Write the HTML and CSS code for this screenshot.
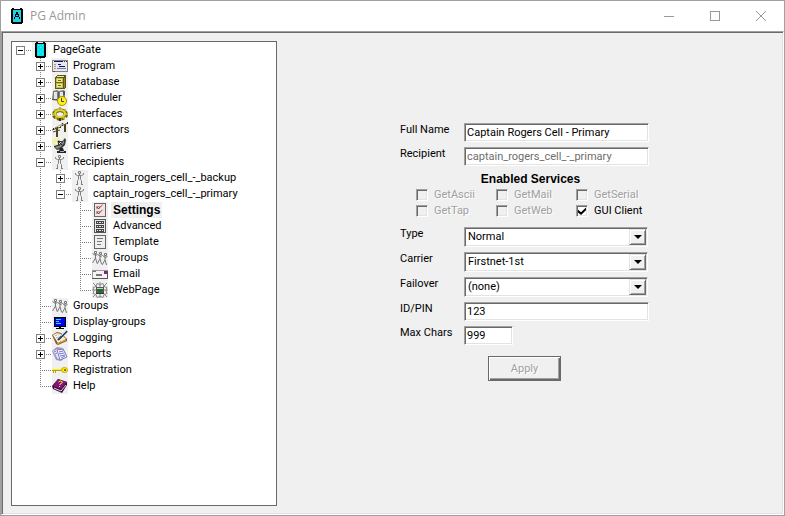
FILE: index.html
```html
<!DOCTYPE html>
<html lang="en">

<head>
    <meta charset="UTF-8">
    <meta name="viewport" content="width=device-width, initial-scale=1.0">
    <title>PG Admin</title>
    <link rel="stylesheet" href="styles.css">
</head>

<body>
    <!-- Icons used more than once in the tree -->
    <svg class="sprite" aria-hidden="true">
        <symbol id="person" viewBox="0 0 16 16">
            <g fill="none" stroke="#808080">
                <path d="M6.5 1.5h2v2h-2zM3.5 3v1.500l2 1h4l2-1V3M6.500 5.500v4l-1 1V15M8.500 5.500v4l1 1V15M7.500 4v2M4 14.500h2M9 14.500h2"/>
            </g>
        </symbol>
        <symbol id="people" viewBox="0 0 16 16">
            <g fill="none" stroke="#777">
                <path d="M2.500 1.500h2v2h-2zM.5 3.500l3 2 2-1M3.500 4v4l-3 5M3.500 8l1.500 5"/>
                <path d="M7.500 2.500h2v2h-2zM5.500 4.500l3 2 2-1M8 5v4l-3 5M8 9l1.500 5"/>
                <path d="M12.500 3.500h2v2h-2zM10.500 5.500l3 2 2-1M13 6v4l-3 5M13 10l1.500 5"/>
            </g>
        </symbol>
    </svg>

    <div class="window">
        <header class="title-bar">
            <svg class="app-icon" viewBox="0 0 12 16">
                <path d="M1 0h2v1h6V0h2v1h1v14h-1v1H1v-1H0V1h1z" fill="#000"/>
                <path d="M2 2h8v12H2z" fill="#19d3e6"/>
                <path d="M5 4h2v2h1v3h1v2H8V9H4v2H3V9h1V6h1zM5 7v1h2V7z" fill="#000"/>
            </svg>
            <h1>PG Admin</h1>
            <button class="window-button" aria-label="Minimize">
                <svg viewBox="0 0 10 10"><path d="M0 5h10v1H0z" fill="#999"/></svg>
            </button>
            <button class="window-button" aria-label="Maximize">
                <svg viewBox="0 0 10 10"><path d="M.5.5h9v9h-9z" fill="none" stroke="#999"/></svg>
            </button>
            <button class="window-button" aria-label="Close">
                <svg class="smooth" viewBox="0 0 10 10"><path d="M0 0l10 10M10 0L0 10" fill="none" stroke="#999"/></svg>
            </button>
        </header>

        <main class="client">
            <nav class="tree-panel">
                <ul class="tree">
                    <li>
                        <div class="node">
                            <span class="branch"><button class="toggle open" aria-label="Collapse"></button></span>
                            <svg class="icon" viewBox="0 0 16 16">
                                <path d="M4 0h2v1h5V0h2v1h1v14h-1v1H4v-1H3V1h1z" fill="#000"/>
                                <path d="M5 2h7v12H5z" fill="#00e4ee"/>
                                <path d="M6 3h1v1H6zM8 5h1v1H8zM10 3h1v1h-1zM6 7h1v1H6zM10 7h1v1h-1zM8 9h1v1H8zM6 11h1v1H6zM10 11h1v1h-1z" fill="#6adfe6"/>
                            </svg>
                            <a href="#pagegate">PageGate</a>
                        </div>
                        <ul>
                            <li>
                                <div class="node">
                                    <span class="branch"><button class="toggle" aria-label="Expand"></button></span>
                                    <svg class="icon" viewBox="0 0 16 16">
                                        <path d="M0 2h16v12H0z" fill="#808080"/>
                                        <path d="M1 3h14v10H1z" fill="#e8e8e8"/>
                                        <path d="M2 3h9v1H2zM6 6h3v1H6zM7 8h6v1H7z" fill="#101080"/>
                                        <path d="M5 10h9v1H5z" fill="#7878a8"/>
                                        <path d="M2 6h2v1H2zM2 8h2v1H2zM2 10h2v1H2z" fill="#999"/>
                                        <path d="M12 3h1v1h-1zM14 3h1v1h-1z" fill="#333"/>
                                        <path d="M1 13h2v1H1z" fill="#d02020"/>
                                    </svg>
                                    <a href="#program">Program</a>
                                </div>
                            </li>
                            <li>
                                <div class="node">
                                    <span class="branch"><button class="toggle" aria-label="Expand"></button></span>
                                    <svg class="icon" viewBox="0 0 16 16">
                                        <path d="M3 3l3-2h8v12l-2 2H3z" fill="#5a5714"/>
                                        <path d="M4 3l2-1h7l-2 1z" fill="#f0eca0"/>
                                        <path d="M4 4h7v10H4z" fill="#c4bc4c"/>
                                        <path d="M12 4l1-1v10l-1 1z" fill="#8c8628"/>
                                        <path d="M5 5h5v3H5zM5 10h5v3H5z" fill="#eee690"/>
                                        <path d="M4 8h7v1H4zM6 6h3v1H6zM6 11h3v1H6z" fill="#6b6620"/>
                                    </svg>
                                    <a href="#database">Database</a>
                                </div>
                            </li>
                            <li>
                                <div class="node">
                                    <span class="branch"><button class="toggle" aria-label="Expand"></button></span>
                                    <svg class="icon smooth" viewBox="0 0 16 16">
                                        <path d="M1 1l4-1 2 1 4-1 2 1v9H8l-2 1-6-1z" fill="#808080"/>
                                        <path d="M2 2h3v7H2zM8 2h3v6H8z" fill="#e6e6e6"/>
                                        <path d="M6 2h1v8H6zM0 9h5v1H0zM11 1h2v4h-2z" fill="#555"/>
                                        <circle cx="10" cy="11" r="4.500" fill="#fff01c" stroke="#a89200"/>
                                        <path d="M9.500 8v3.500H12" fill="none" stroke="#444"/>
                                    </svg>
                                    <a href="#scheduler">Scheduler</a>
                                </div>
                            </li>
                            <li>
                                <div class="node">
                                    <span class="branch"><button class="toggle" aria-label="Expand"></button></span>
                                    <svg class="icon smooth" viewBox="0 0 16 16">
                                        <ellipse cx="8" cy="8.500" rx="6" ry="4" fill="none" stroke="#6a6410" stroke-width="4" stroke-dasharray="2.500 1.500"/>
                                        <ellipse cx="8" cy="8" rx="5" ry="3.500" fill="none" stroke="#827b14" stroke-width="3"/>
                                        <ellipse cx="8" cy="7.500" rx="5" ry="3.500" fill="none" stroke="#e0d634" stroke-width="2"/>
                                        <path d="M7 1h2v3H7zM2 3h2v2H2zM12 3h2v2h-2zM0 7h2v2H0zM14 7h2v2h-2zM3 11h2v2H3zM11 11h2v2h-2z" fill="#bdb428"/>
                                        <path d="M7 12h2v3H7z" fill="#3d3a08"/>
                                        <ellipse cx="8" cy="8" rx="3" ry="1.500" fill="#f0f0f0"/>
                                    </svg>
                                    <a href="#interfaces">Interfaces</a>
                                </div>
                            </li>
                            <li>
                                <div class="node">
                                    <span class="branch"><button class="toggle" aria-label="Expand"></button></span>
                                    <svg class="icon smooth" viewBox="0 0 16 16">
                                        <path d="M4 5h2v10H4zM12 2h2v8h-2z" fill="#4c451c"/>
                                        <path d="M0 8l9-3M1 10l7-2M9 4l7-3" fill="none" stroke="#5a512a"/>
                                        <path d="M1 6h1v2H1zM3 5h1v2H3zM8 4h1v2H8zM10 1h1v3h-1zM15 0h1v2h-1z" fill="#302c18"/>
                                        <path d="M8 4.500l4-3M3 6l7-4" fill="none" stroke="#aaa587"/>
                                    </svg>
                                    <a href="#connectors">Connectors</a>
                                </div>
                            </li>
                            <li>
                                <div class="node">
                                    <span class="branch"><button class="toggle" aria-label="Expand"></button></span>
                                    <svg class="icon smooth" viewBox="0 0 16 16">
                                        <path d="M0 3.500l3-2 4-1M0 6.500l3-3 3-1M2 7.500l2-3" fill="none" stroke="#fff000" stroke-dasharray="2 1"/>
                                        <path d="M13 0l1 2-1 5-4 4-4 1-3-3V8l6-2z" fill="#383838"/>
                                        <path d="M12 2v3l-3 4-4 2-2-2 5-2z" fill="#888"/>
                                        <path d="M6 3l4 4M6 3l1 5M6 3l5 1" fill="none" stroke="#222"/>
                                        <path d="M8 10h3l1 3h2v2H5v-2h2z" fill="#222"/>
                                        <path d="M8 13h4v1H8z" fill="#aaa"/>
                                    </svg>
                                    <a href="#carriers">Carriers</a>
                                </div>
                            </li>
                            <li>
                                <div class="node">
                                    <span class="branch"><button class="toggle open" aria-label="Collapse"></button></span>
                                    <svg class="icon smooth"><use href="#person"/></svg>
                                    <a href="#recipients">Recipients</a>
                                </div>
                                <ul>
                                    <li>
                                        <div class="node">
                                            <span class="branch"><button class="toggle" aria-label="Expand"></button></span>
                                            <svg class="icon smooth"><use href="#person"/></svg>
                                            <a href="#backup">captain_rogers_cell_-_backup</a>
                                        </div>
                                    </li>
                                    <li>
                                        <div class="node">
                                            <span class="branch"><button class="toggle open" aria-label="Collapse"></button></span>
                                            <svg class="icon smooth"><use href="#person"/></svg>
                                            <a href="#primary">captain_rogers_cell_-_primary</a>
                                        </div>
                                        <ul>
                                            <li>
                                                <div class="node">
                                                    <span class="branch"></span>
                                                    <svg class="icon smooth" viewBox="0 0 16 16">
                                                        <path d="M2 1h12v14H2z" fill="#666"/>
                                                        <path d="M3 2h10v12H3z" fill="#e8e8e8"/>
                                                        <path d="M4.500 4.500h3v2h-3zM4.500 9.500h3v2h-3z" fill="none" stroke="#999"/>
                                                        <path d="M5 5l1.500 1.500 4-3.500M5 10l1.500 1.500 4-3.500" fill="none" stroke="#f01818"/>
                                                    </svg>
                                                    <a href="#settings" class="selected">Settings</a>
                                                </div>
                                            </li>
                                            <li>
                                                <div class="node">
                                                    <span class="branch"></span>
                                                    <svg class="icon" viewBox="0 0 16 16">
                                                        <path d="M2 1h12v14H2z" fill="#555"/>
                                                        <path d="M3 2h10v12H3z" fill="#e8e8e8"/>
                                                        <path d="M4 3h8v3H4zM4 7h8v3H4zM4 11h8v3H4z" fill="#444"/>
                                                        <path d="M5 4h1v1H5zM7 4h2v1H7zM10 4h1v1h-1zM5 8h1v1H5zM7 8h2v1H7zM10 8h1v1h-1zM5 12h1v1H5zM7 12h2v1H7zM10 12h1v1h-1z" fill="#e8e8e8"/>
                                                    </svg>
                                                    <a href="#advanced">Advanced</a>
                                                </div>
                                            </li>
                                            <li>
                                                <div class="node">
                                                    <span class="branch"></span>
                                                    <svg class="icon" viewBox="0 0 16 16">
                                                        <path d="M2 1h12v14H2z" fill="#666"/>
                                                        <path d="M3 2h10v12H3z" fill="#eee"/>
                                                        <path d="M5 4h6v1H5zM5 7h5v1H5zM5 10h4v1H5z" fill="#777"/>
                                                    </svg>
                                                    <a href="#template">Template</a>
                                                </div>
                                            </li>
                                            <li>
                                                <div class="node">
                                                    <span class="branch"></span>
                                                    <svg class="icon smooth"><use href="#people"/></svg>
                                                    <a href="#member-groups">Groups</a>
                                                </div>
                                            </li>
                                            <li>
                                                <div class="node">
                                                    <span class="branch"></span>
                                                    <svg class="icon" viewBox="0 0 16 16">
                                                        <path d="M0 4h16v9H0z" fill="#999"/>
                                                        <path d="M1 5h14v7H1z" fill="#f4f4f4"/>
                                                        <path d="M1 5h3v1H1zM4 8h6v2H4z" fill="#777"/>
                                                        <path d="M12 5h3v3h-3z" fill="#8a1a98"/>
                                                        <path d="M0 12h16v1H0zM15 5h1v8h-1z" fill="#555"/>
                                                    </svg>
                                                    <a href="#email">Email</a>
                                                </div>
                                            </li>
                                            <li>
                                                <div class="node">
                                                    <span class="branch"></span>
                                                    <svg class="icon smooth" viewBox="0 0 16 16">
                                                        <g fill="none" stroke="#888">
                                                            <path d="M1 1l14 14M15 1L1 15M8 0v16M0 8h16"/>
                                                            <path d="M5 1.500l3 1 3-1 1 3 3 1-1 3 1 3-3 1-1 3-3-1-3 1-1-3-3-1 1-3-1-3 3-1z"/>
                                                        </g>
                                                        <path d="M4 5h8v7H4z" fill="#555"/>
                                                        <path d="M5 6h6v1H5z" fill="#ccc"/>
                                                        <path d="M6 7h4v3H6z" fill="#087a18"/>
                                                        <path d="M4 11h8v1H4z" fill="#333"/>
                                                    </svg>
                                                    <a href="#webpage">WebPage</a>
                                                </div>
                                            </li>
                                        </ul>
                                    </li>
                                </ul>
                            </li>
                            <li>
                                <div class="node">
                                    <span class="branch"></span>
                                    <svg class="icon smooth"><use href="#people"/></svg>
                                    <a href="#groups">Groups</a>
                                </div>
                            </li>
                            <li>
                                <div class="node">
                                    <span class="branch"></span>
                                    <svg class="icon" viewBox="0 0 16 16">
                                        <path d="M2 3h12v10H9v1h3v1H4v-1h3v-1H2z" fill="#000"/>
                                        <path d="M3 4h10v8H3z" fill="#0000f0"/>
                                        <path d="M4 5h5v1H4zM4 7h3v1H4zM4 9h5v1H4z" fill="#20e8f0"/>
                                    </svg>
                                    <a href="#display-groups">Display-groups</a>
                                </div>
                            </li>
                            <li>
                                <div class="node">
                                    <span class="branch"><button class="toggle" aria-label="Expand"></button></span>
                                    <svg class="icon smooth" viewBox="0 0 16 16">
                                        <path d="M0 5l5-3 4 1 6 6v2l-9 4-2-1z" fill="#8a5a20"/>
                                        <path d="M1 5l4-2 4 8-3 2z" fill="#fffdf0"/>
                                        <path d="M5 3l4 1 5 5-5 3z" fill="#f3ead0"/>
                                        <path d="M3 6l2-1M4 8l2-1M5 10l2-1" fill="none" stroke="#9ab"/>
                                        <path d="M15 1L8 8l-2 2" fill="none" stroke="#203c68" stroke-width="2"/>
                                        <path d="M15 0l-6 6" fill="none" stroke="#a9c8f0"/>
                                        <path d="M5 14l9-4" fill="none" stroke="#e0a030"/>
                                    </svg>
                                    <a href="#logging">Logging</a>
                                </div>
                            </li>
                            <li>
                                <div class="node">
                                    <span class="branch"><button class="toggle" aria-label="Expand"></button></span>
                                    <svg class="icon smooth" viewBox="0 0 16 16">
                                        <path d="M0 5l5-4 6 1 4 8-6 5-5-1z" fill="#9a9ac4"/>
                                        <path d="M1 5l5-2 4 9-4 1z" fill="#e8e8f8"/>
                                        <path d="M5 4l6-1 4 8-7 3z" fill="#f6f6ff" stroke="#7c7cc0"/>
                                        <path d="M7 6l4-1M7 8l5-1M8 10l5-1M9 12l4-2M2 6l2-1M3 8l2-1" fill="none" stroke="#7474d4"/>
                                        <path d="M3 2h4v1H3zM9 2h2v1H9z" fill="#b090a4"/>
                                    </svg>
                                    <a href="#reports">Reports</a>
                                </div>
                            </li>
                            <li>
                                <div class="node">
                                    <span class="branch"></span>
                                    <svg class="icon smooth" viewBox="0 0 16 16">
                                        <path d="M0 7h9v2H4v2H3V9H2v2H1V9H0z" fill="#b8a400"/>
                                        <path d="M0 7h10v1H0z" fill="#fff018"/>
                                        <ellipse cx="12.500" cy="8" rx="3" ry="2.500" fill="#fff018" stroke="#c0aa00"/>
                                        <path d="M12 7h2v2h-2z" fill="#8a7a00"/>
                                    </svg>
                                    <a href="#registration">Registration</a>
                                </div>
                            </li>
                            <li>
                                <div class="node">
                                    <span class="branch"></span>
                                    <svg class="icon smooth" viewBox="0 0 16 16">
                                        <path d="M6 1l9 3v3l-5 8-9-4-1-3z" fill="#3c083c"/>
                                        <path d="M6 1l9 3-6 7-8-3z" fill="#82127e"/>
                                        <path d="M2 10l7 3 5-6" fill="none" stroke="#ddd"/>
                                        <path d="M6.500 4l2-1 2 1-1 1.500-1.500.5v1M7.500 8v1" fill="none" stroke="#fff000"/>
                                    </svg>
                                    <a href="#help">Help</a>
                                </div>
                            </li>
                        </ul>
                    </li>
                </ul>
            </nav>

            <form class="settings-form">
                <label for="fullName">Full Name</label>
                <input type="text" id="fullName" value="Captain Rogers Cell - Primary">
                <label for="recipient">Recipient</label>
                <input type="text" id="recipient" value="captain_rogers_cell_-_primary" disabled>

                <div class="services" role="group" aria-labelledby="servicesTitle">
                    <h2 id="servicesTitle">Enabled Services</h2>
                    <label class="disabled"><input type="checkbox" disabled>GetAscii</label>
                    <label class="disabled"><input type="checkbox" disabled>GetMail</label>
                    <label class="disabled"><input type="checkbox" disabled>GetSerial</label>
                    <label class="disabled"><input type="checkbox" disabled>GetTap</label>
                    <label class="disabled"><input type="checkbox" disabled>GetWeb</label>
                    <label><input type="checkbox" checked>GUI Client</label>
                </div>

                <label for="type">Type</label>
                <div class="combo">
                    <select id="type"><option>Normal</option></select>
                    <span class="combo-arrow"></span>
                </div>
                <label for="carrier">Carrier</label>
                <div class="combo">
                    <select id="carrier"><option>Firstnet-1st</option></select>
                    <span class="combo-arrow"></span>
                </div>
                <label for="failover">Failover</label>
                <div class="combo">
                    <select id="failover"><option>(none)</option></select>
                    <span class="combo-arrow"></span>
                </div>
                <label for="pin">ID/PIN</label>
                <input type="text" id="pin" value="123">
                <label for="maxChars">Max Chars</label>
                <input type="text" id="maxChars" class="short" value="999">

                <button type="submit" class="apply-button" disabled>Apply</button>
            </form>
        </main>
    </div>
</body>

</html>
```
FILE: styles.css
```css
* {
    box-sizing: border-box;
}

body {
    margin: 0;
    font-family: Roboto, "Liberation Sans", Arial, sans-serif;
    font-size: 11px;
    line-height: 16px;
    color: #000;
}

input,
select,
button {
    font: inherit;
    color: inherit;
    margin: 0;
    padding: 0;
    border-radius: 0;
}

svg {
    shape-rendering: crispEdges;
}

.smooth {
    shape-rendering: auto;
}

.sprite {
    display: none;
}

.sprite symbol {
    shape-rendering: auto;
}

.window {
    display: flex;
    flex-direction: column;
    min-height: 100vh;
    border: 1px solid #a0a0a0;
    background-color: #f0f0f0;
}

/* Title bar */
.title-bar {
    display: flex;
    align-items: center;
    height: 30px;
    padding-left: 10px;
    background-color: #fff;
}

.app-icon {
    width: 12px;
    height: 16px;
}

.title-bar h1 {
    flex: 1;
    margin: 0;
    padding-left: 7px;
    font-family: "Open Sans", "Segoe UI", sans-serif;
    font-size: 12px;
    font-weight: normal;
    color: #999;
}

.window-button {
    display: flex;
    align-items: center;
    justify-content: center;
    width: 46px;
    height: 30px;
    border: none;
    background: none;
}

.window-button svg {
    width: 10px;
    height: 10px;
}

/* Client area with a sunken edge */
.client {
    flex: 1;
    display: flex;
    padding: 8px;
    border: 1px solid;
    border-color: #a0a0a0 #fff #fff #a0a0a0;
    box-shadow: inset 1px 1px #696969, inset -1px -1px #e3e3e3;
}

.tree-panel {
    width: 266px;
    margin: 1px 1px 0;
    border: 1px solid #696969;
    background-color: #fff;
}

.tree,
.tree ul {
    margin: 0;
    padding: 0;
    list-style: none;
}

.tree ul {
    padding-left: 20px;
}

/* Dotted line that joins the siblings */
.tree ul > li {
    background: repeating-linear-gradient(#808080 0 1px, transparent 1px 2px) 8px 0 / 1px 100% no-repeat;
}

.tree ul > li:last-child {
    background-size: 1px 9px;
}

.node {
    display: flex;
    align-items: center;
    height: 16px;
}

.branch {
    flex: none;
    width: 20px;
    height: 16px;
    padding: 4px;
    background: repeating-linear-gradient(90deg, #808080 0 1px, transparent 1px 2px) 8px 8px / 11px 1px no-repeat;
}

.toggle {
    display: block;
    width: 9px;
    height: 9px;
    border: 1px solid #808080;
    background:
        linear-gradient(#000, #000) center / 5px 1px no-repeat,
        linear-gradient(#000, #000) center / 1px 5px no-repeat,
        #fff;
}

.toggle.open {
    background: linear-gradient(#000, #000) center / 5px 1px no-repeat, #fff;
}

.icon {
    flex: none;
    width: 16px;
    height: 16px;
    background-color: #f0f0f0;
}

.node a {
    margin-left: 3px;
    padding: 0 2px;
    color: #000;
    text-decoration: none;
    white-space: nowrap;
}

.node a.selected {
    font-family: "Liberation Sans", Arial, sans-serif;
    font-size: 12px;
    font-weight: bold;
    background-color: #f0f0f0;
}

/* Settings form */
.settings-form {
    display: grid;
    grid-template-columns: 64px 185px;
    align-content: start;
    gap: 5px 0;
    padding: 83px 0 0 122px;
}

.settings-form > label {
    line-height: 14px;
}

.settings-form input[type="text"] {
    width: 100%;
    height: 19px;
    padding: 0 2px;
    border: 1px solid;
    border-color: #a0a0a0 #fff #fff #a0a0a0;
    background-color: #fff;
    box-shadow: inset 1px 1px #696969, inset -1px -1px #e3e3e3;
}

.settings-form input[type="text"]:disabled {
    color: #6d6d6d;
}

.settings-form input.short {
    width: 49px;
}

.services {
    grid-column: 1 / -1;
    display: grid;
    grid-template-columns: 80px 80px 1fr;
    padding: 0 4px 3px 16px;
}

.services h2 {
    grid-column: 1 / -1;
    margin: 0;
    font-family: "Liberation Sans", Arial, sans-serif;
    font-size: 12px;
    line-height: 16px;
    text-align: center;
}

.services label {
    display: flex;
    align-items: center;
    gap: 6px;
    white-space: nowrap;
}

.services .disabled {
    color: #a0a0a0;
    text-shadow: 1px 1px #fff;
}

.services input {
    appearance: none;
    display: grid;
    place-items: center;
    width: 12px;
    height: 12px;
    border: 1px solid;
    border-color: #a0a0a0 #fff #fff #a0a0a0;
    background-color: #fff;
    box-shadow: inset 1px 1px #696969, inset -1px -1px #e3e3e3;
}

.services input:disabled {
    background-color: #f0f0f0;
}

.services input:checked::before {
    content: "";
    width: 8px;
    height: 8px;
    background-color: #000;
    clip-path: polygon(0 35%, 38% 65%, 100% 5%, 100% 40%, 38% 100%, 0 70%);
}

.combo {
    display: flex;
    height: 20px;
    margin-right: 1px;
    padding: 1px;
    border: 1px solid;
    border-color: #a0a0a0 #fff #fff #a0a0a0;
    background-color: #fff;
    box-shadow: inset 1px 1px #696969, inset -1px -1px #e3e3e3;
}

.combo select {
    appearance: none;
    flex: 1;
    padding: 0 2px;
    border: none;
    background: none;
}

.combo-arrow {
    display: grid;
    place-items: center;
    width: 17px;
    border: 1px solid;
    border-color: #e3e3e3 #696969 #696969 #e3e3e3;
    background-color: #f0f0f0;
    box-shadow: inset 1px 1px #fff, inset -1px -1px #a0a0a0;
}

.combo-arrow::before {
    content: "";
    border: solid transparent;
    border-width: 4px 4px 0;
    border-top-color: #000;
}

.apply-button {
    grid-column: 1 / -1;
    justify-self: center;
    width: 73px;
    height: 25px;
    margin-top: 6px;
    border: 1px solid #696969;
    background-color: #f0f0f0;
    color: #a0a0a0;
    text-shadow: 1px 1px #fff;
    box-shadow: inset 1px 1px #fff, inset -1px -1px #696969, inset -2px -2px #a0a0a0;
}
```
